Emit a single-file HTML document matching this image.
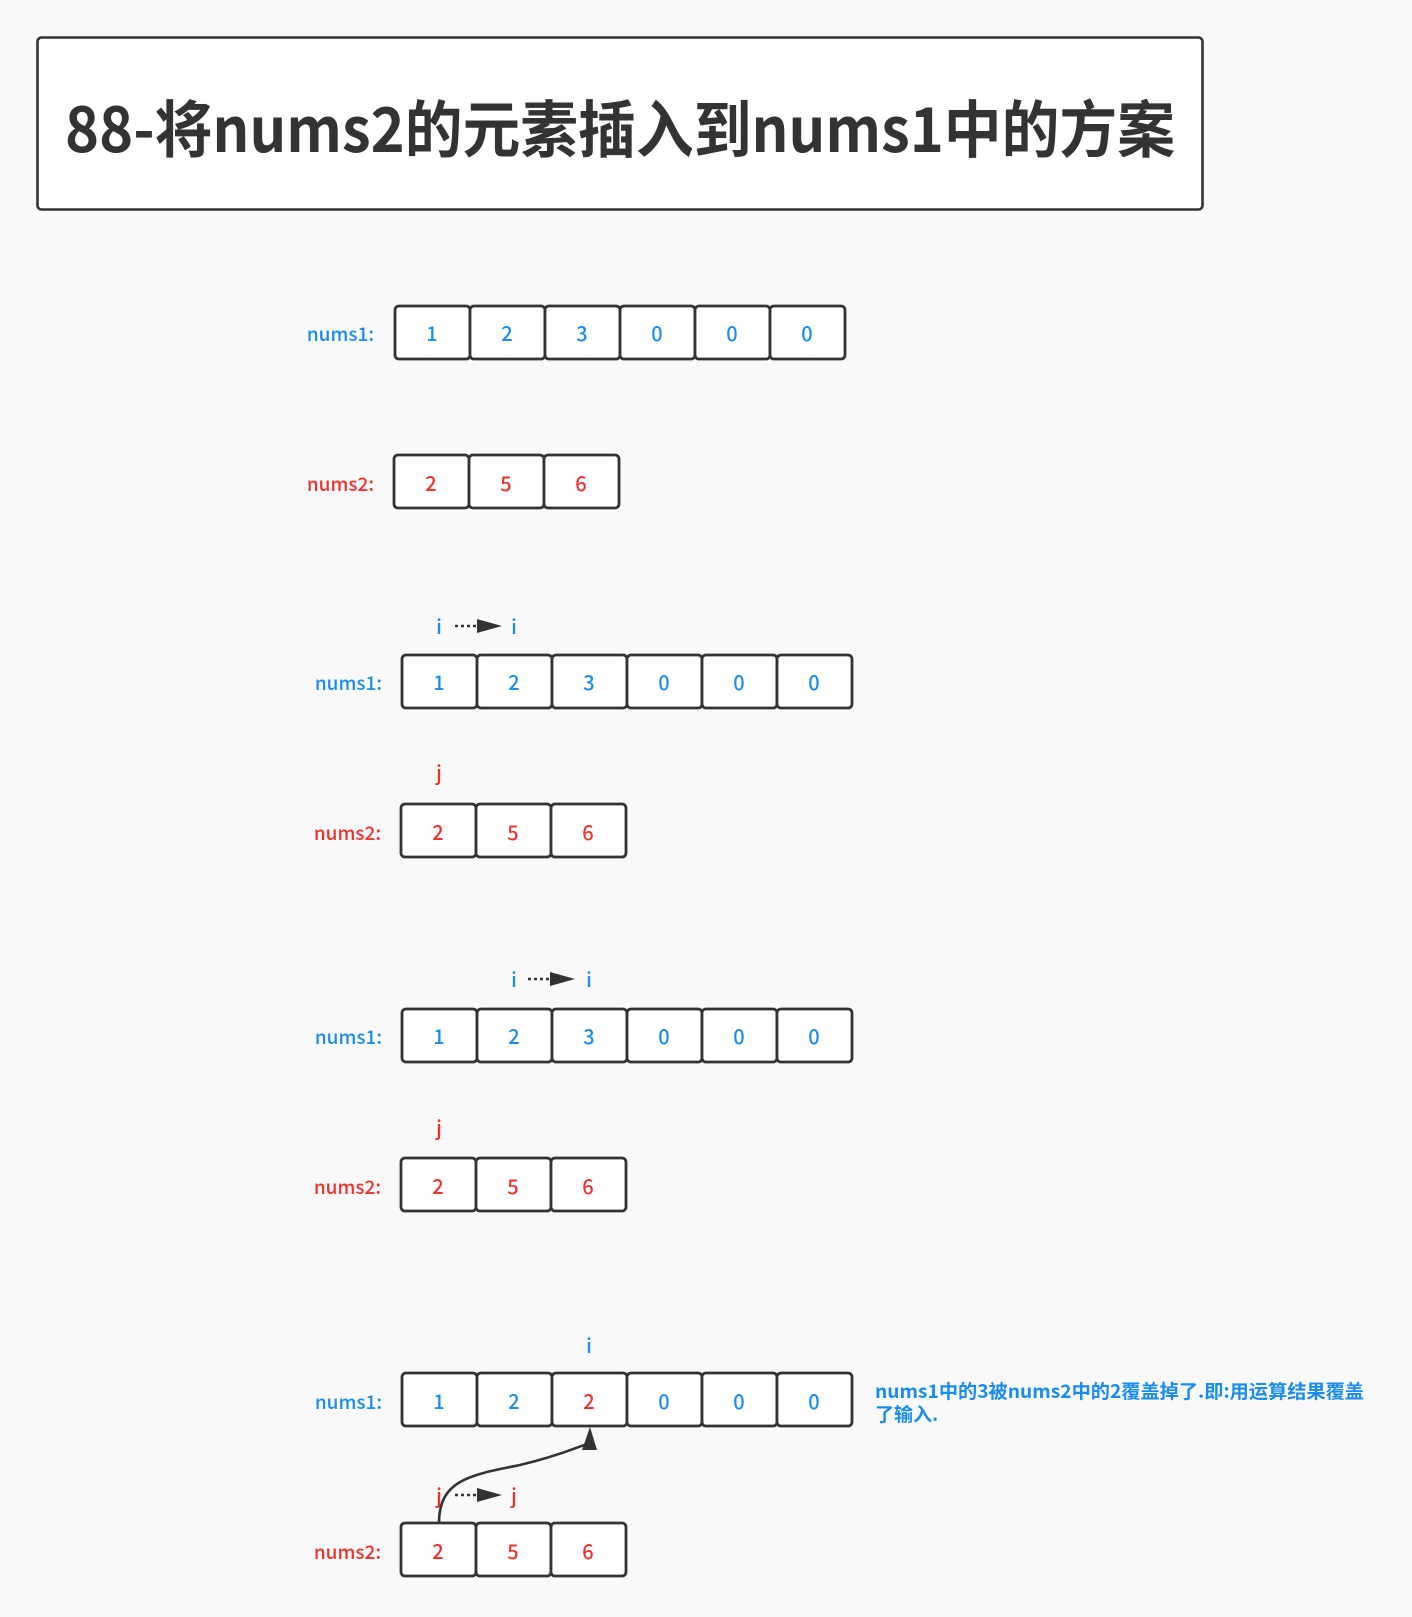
<!DOCTYPE html>
<html><head><meta charset="utf-8"><style>
html,body{margin:0;padding:0;background:#f9f9f9;}
svg{display:block}
text{font-family:"Noto Sans CJK SC","Liberation Sans",sans-serif;font-weight:500}
.b{fill:#1a8cf0}.r{fill:#f0302b}
.c{fill:#fff;stroke:#333;stroke-width:2.8}
.n{font-size:20px;text-anchor:middle}
.l{font-size:19px;text-anchor:end}
</style></head><body>
<svg width="1412" height="1617" viewBox="0 0 1412 1617" xmlns="http://www.w3.org/2000/svg">
<rect x="0" y="0" width="1412" height="1617" fill="#f9f9f9"/>
<rect x="37.5" y="37.5" width="1165" height="172" rx="4" fill="#fff" stroke="#333" stroke-width="2.6"/>
<text x="620" y="152" text-anchor="middle" font-size="62" font-weight="bold" fill="#333" style="font-family:'Noto Sans CJK SC',sans-serif;font-weight:bold" textLength="1110" lengthAdjust="spacingAndGlyphs">88-将nums2的元素插入到nums1中的方案</text>
<!-- row1 -->
<g>
<text class="l b" x="374" y="341">nums1:</text>
<rect class="c" x="395" y="306" width="75" height="53" rx="4"/><rect class="c" x="470" y="306" width="75" height="53" rx="4"/><rect class="c" x="545" y="306" width="75" height="53" rx="4"/><rect class="c" x="620" y="306" width="75" height="53" rx="4"/><rect class="c" x="695" y="306" width="75" height="53" rx="4"/><rect class="c" x="770" y="306" width="75" height="53" rx="4"/>
<text class="n b" x="432" y="341">1</text><text class="n b" x="507" y="341">2</text><text class="n b" x="582" y="341">3</text><text class="n b" x="657" y="341">0</text><text class="n b" x="732" y="341">0</text><text class="n b" x="807" y="341">0</text>
</g>
<!-- row2 -->
<g>
<text class="l r" x="374" y="491">nums2:</text>
<rect class="c" x="394" y="455" width="75" height="53" rx="4"/><rect class="c" x="469" y="455" width="75" height="53" rx="4"/><rect class="c" x="544" y="455" width="75" height="53" rx="4"/>
<text class="n r" x="431" y="491">2</text><text class="n r" x="506" y="491">5</text><text class="n r" x="581" y="491">6</text>
</g>
<!-- row3 -->
<g>
<text class="n b" x="439" y="634">i</text><text class="n b" x="514" y="634">i</text>
<line x1="455" y1="626" x2="478" y2="626" stroke="#333" stroke-width="2.5" stroke-dasharray="3,3"/>
<polygon points="477,619 502,626 477,633" fill="#333"/>
<text class="l b" x="382" y="690">nums1:</text>
<rect class="c" x="402" y="655" width="75" height="53" rx="4"/><rect class="c" x="477" y="655" width="75" height="53" rx="4"/><rect class="c" x="552" y="655" width="75" height="53" rx="4"/><rect class="c" x="627" y="655" width="75" height="53" rx="4"/><rect class="c" x="702" y="655" width="75" height="53" rx="4"/><rect class="c" x="777" y="655" width="75" height="53" rx="4"/>
<text class="n b" x="439" y="690">1</text><text class="n b" x="514" y="690">2</text><text class="n b" x="589" y="690">3</text><text class="n b" x="664" y="690">0</text><text class="n b" x="739" y="690">0</text><text class="n b" x="814" y="690">0</text>
</g>
<g>
<text class="n r" x="439" y="780">j</text>
<text class="l r" x="381" y="840">nums2:</text>
<rect class="c" x="401" y="804" width="75" height="53" rx="4"/><rect class="c" x="476" y="804" width="75" height="53" rx="4"/><rect class="c" x="551" y="804" width="75" height="53" rx="4"/>
<text class="n r" x="438" y="840">2</text><text class="n r" x="513" y="840">5</text><text class="n r" x="588" y="840">6</text>
</g>
<!-- row5 -->
<g>
<text class="n b" x="514" y="987">i</text><text class="n b" x="589" y="987">i</text>
<line x1="528" y1="979" x2="551" y2="979" stroke="#333" stroke-width="2.5" stroke-dasharray="3,3"/>
<polygon points="550,972 575,979 550,986" fill="#333"/>
<text class="l b" x="382" y="1044">nums1:</text>
<rect class="c" x="402" y="1009" width="75" height="53" rx="4"/><rect class="c" x="477" y="1009" width="75" height="53" rx="4"/><rect class="c" x="552" y="1009" width="75" height="53" rx="4"/><rect class="c" x="627" y="1009" width="75" height="53" rx="4"/><rect class="c" x="702" y="1009" width="75" height="53" rx="4"/><rect class="c" x="777" y="1009" width="75" height="53" rx="4"/>
<text class="n b" x="439" y="1044">1</text><text class="n b" x="514" y="1044">2</text><text class="n b" x="589" y="1044">3</text><text class="n b" x="664" y="1044">0</text><text class="n b" x="739" y="1044">0</text><text class="n b" x="814" y="1044">0</text>
</g>
<g>
<text class="n r" x="439" y="1135">j</text>
<text class="l r" x="381" y="1194">nums2:</text>
<rect class="c" x="401" y="1158" width="75" height="53" rx="4"/><rect class="c" x="476" y="1158" width="75" height="53" rx="4"/><rect class="c" x="551" y="1158" width="75" height="53" rx="4"/>
<text class="n r" x="438" y="1194">2</text><text class="n r" x="513" y="1194">5</text><text class="n r" x="588" y="1194">6</text>
</g>
<!-- row7 -->
<g>
<text class="n b" x="589" y="1353">i</text>
<text class="l b" x="382" y="1409">nums1:</text>
<rect class="c" x="402" y="1373" width="75" height="53" rx="4"/><rect class="c" x="477" y="1373" width="75" height="53" rx="4"/><rect class="c" x="552" y="1373" width="75" height="53" rx="4"/><rect class="c" x="627" y="1373" width="75" height="53" rx="4"/><rect class="c" x="702" y="1373" width="75" height="53" rx="4"/><rect class="c" x="777" y="1373" width="75" height="53" rx="4"/>
<text class="n b" x="439" y="1409">1</text><text class="n b" x="514" y="1409">2</text><text class="n r" x="589" y="1409">2</text><text class="n b" x="664" y="1409">0</text><text class="n b" x="739" y="1409">0</text><text class="n b" x="814" y="1409">0</text>
<text class="b" x="875" y="1398" font-size="19" style="font-weight:bold" textLength="489" lengthAdjust="spacingAndGlyphs">nums1中的3被nums2中的2覆盖掉了.即:用运算结果覆盖</text>
<text class="b" x="875" y="1421" font-size="19" style="font-weight:bold">了输入.</text>
</g>
<g>
<text class="n r" x="439" y="1503">j</text><text class="n r" x="514" y="1503">j</text>
<line x1="455" y1="1495" x2="478" y2="1495" stroke="#333" stroke-width="2.5" stroke-dasharray="3,3"/>
<polygon points="477,1488 502,1495 477,1502" fill="#333"/>
<path d="M439,1523 C439,1480 470,1475 520,1465 C575,1452 589,1440 589,1446" fill="none" stroke="#333" stroke-width="2.6"/>
<polygon points="582,1450 590,1427 597,1450" fill="#333"/>
<text class="l r" x="381" y="1559">nums2:</text>
<rect class="c" x="401" y="1523" width="75" height="53" rx="4"/><rect class="c" x="476" y="1523" width="75" height="53" rx="4"/><rect class="c" x="551" y="1523" width="75" height="53" rx="4"/>
<text class="n r" x="438" y="1559">2</text><text class="n r" x="513" y="1559">5</text><text class="n r" x="588" y="1559">6</text>
</g>
</svg>
</body></html>
